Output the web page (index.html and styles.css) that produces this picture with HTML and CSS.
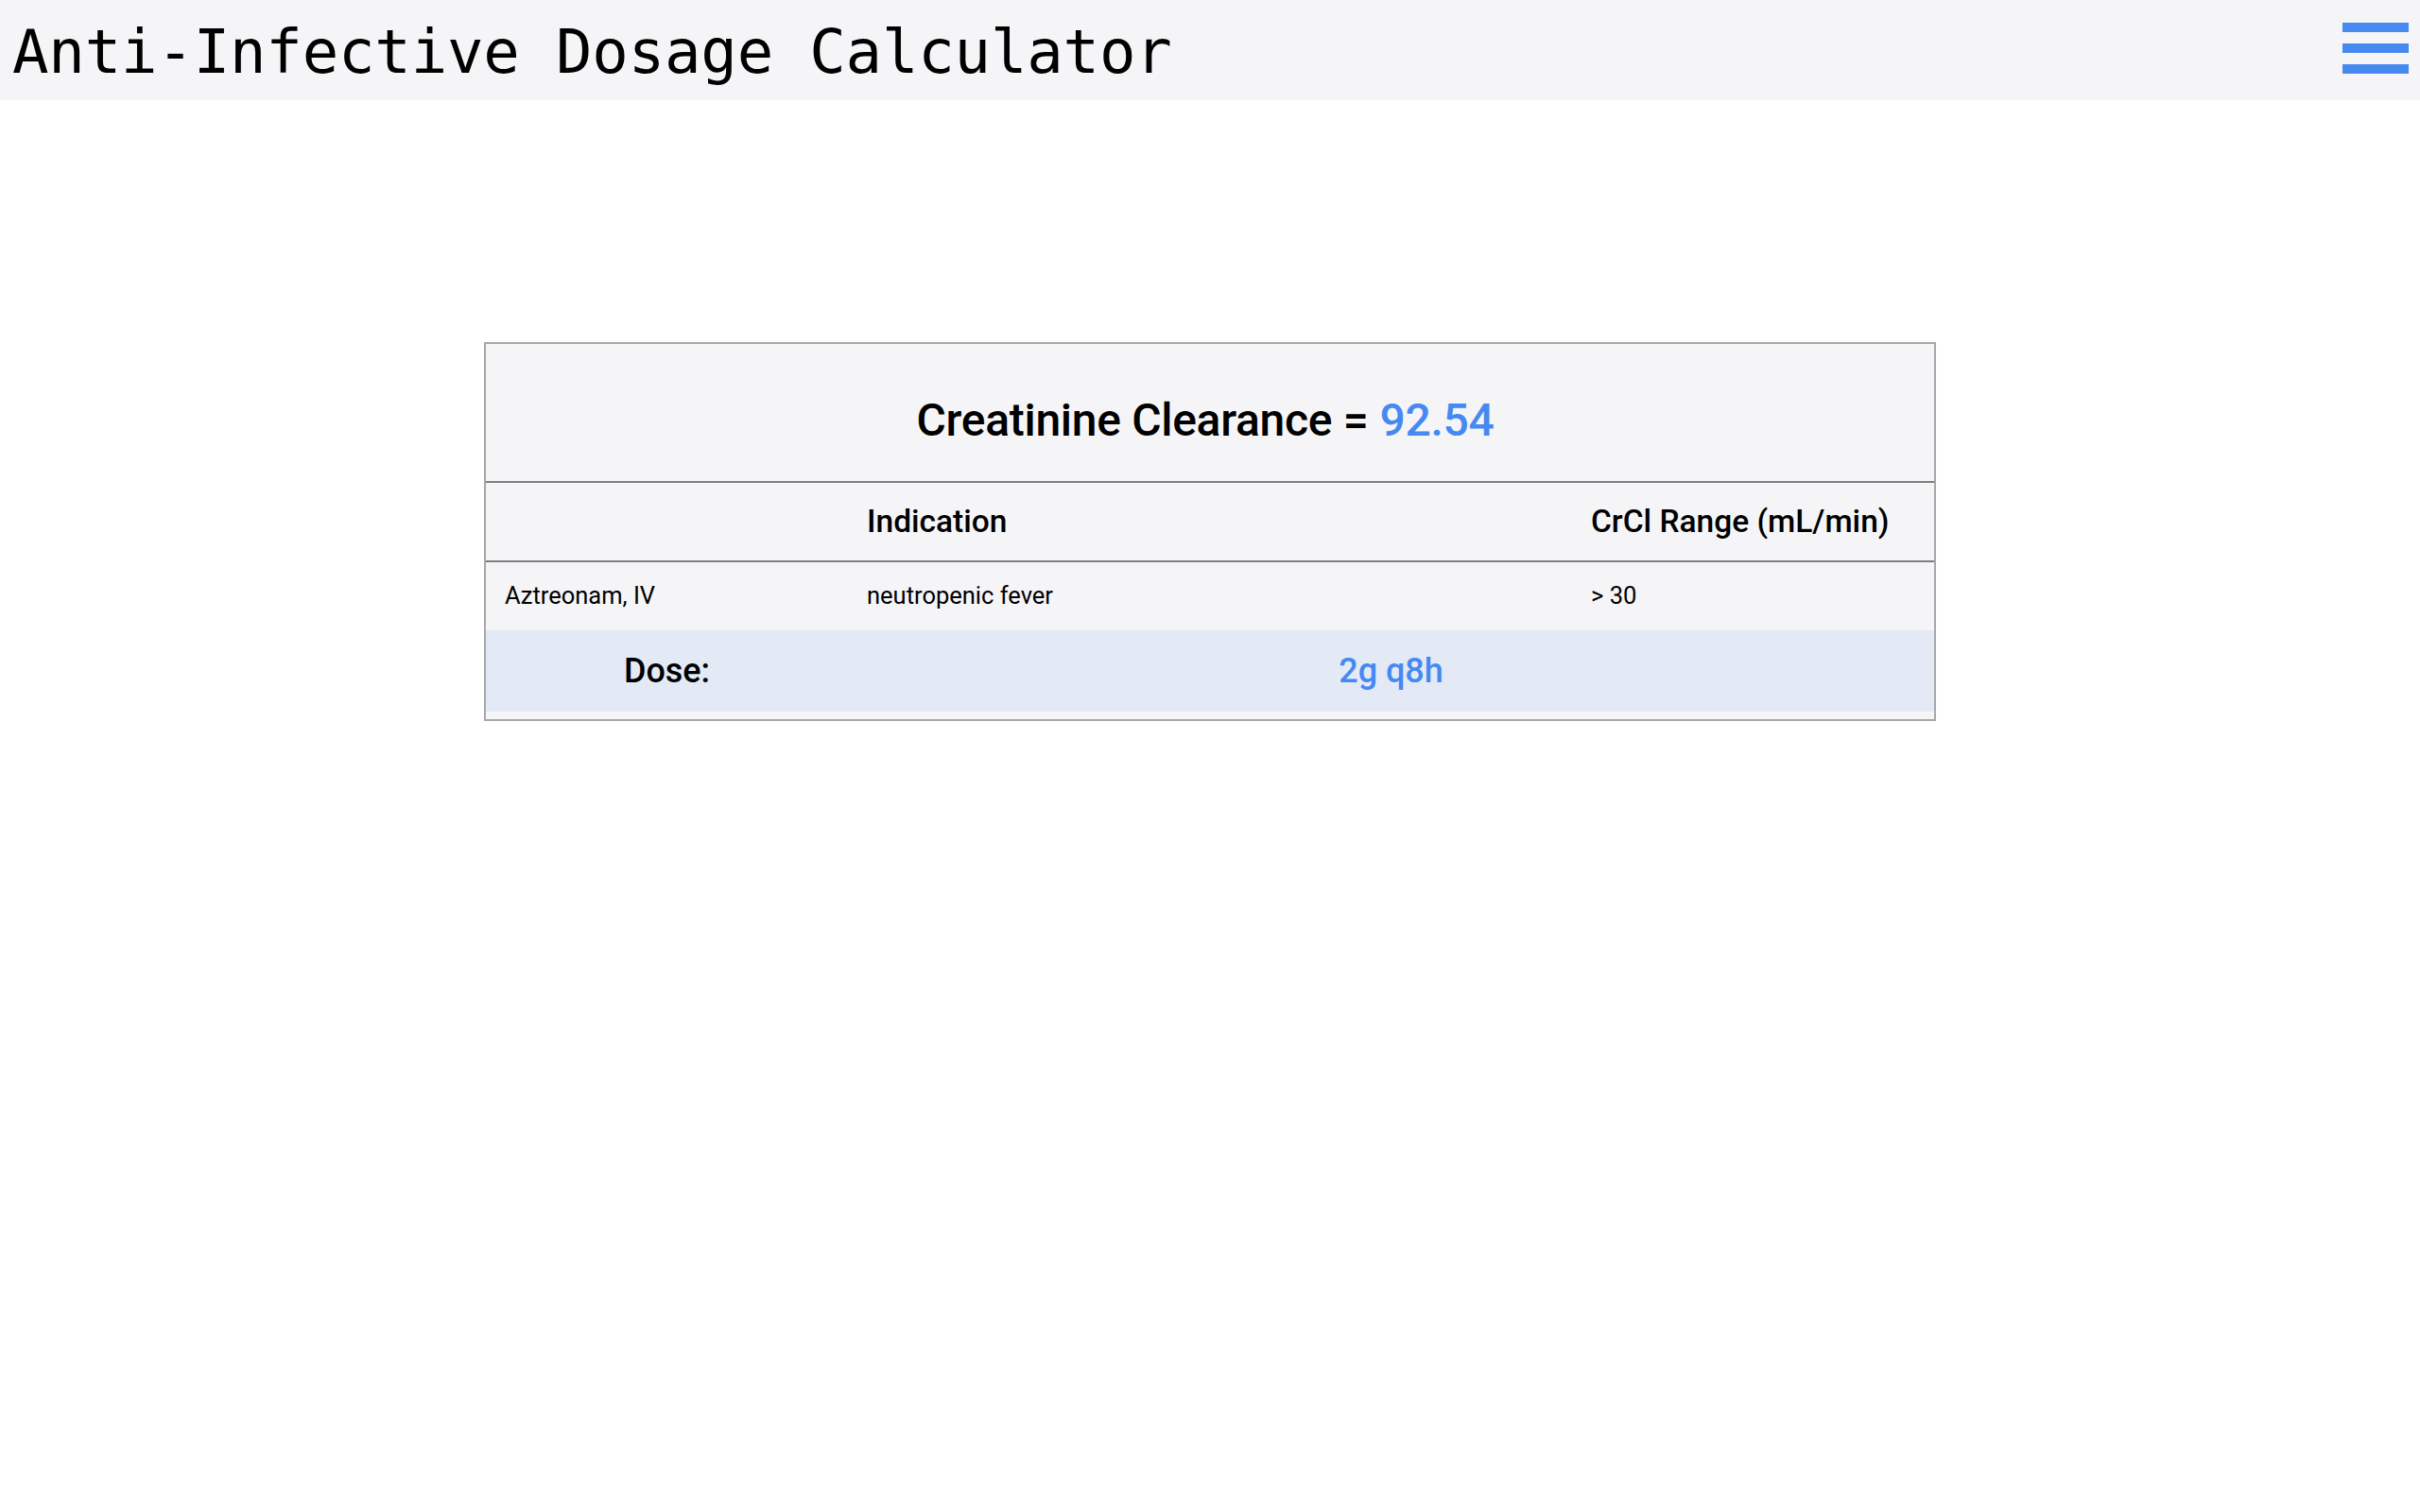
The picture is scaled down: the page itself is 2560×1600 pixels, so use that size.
FILE: index.html
```html
<!DOCTYPE html>
<html lang="en">
<head>
<meta charset="utf-8">
<title>Anti-Infective Dosage Calculator</title>
<link rel="stylesheet" href="styles.css">
</head>
<body>
<header class="topbar">
  <h1 class="app-title">Anti-Infective Dosage Calculator</h1>
  <button class="menu-btn" aria-label="Menu">
    <span class="bar"></span><span class="bar"></span><span class="bar"></span>
  </button>
</header>
<main class="content">
  <section class="result-card">
    <h2 class="crcl">Creatinine Clearance = <span class="crcl-value">92.54</span></h2>
    <div class="grid head-row">
      <div class="cell"></div>
      <div class="cell">Indication</div>
      <div class="cell">CrCl Range (mL/min)</div>
    </div>
    <div class="grid body-row">
      <div class="cell">Aztreonam, IV</div>
      <div class="cell">neutropenic fever</div>
      <div class="cell">&gt; 30</div>
    </div>
    <div class="dose-row">
      <div class="dose-label">Dose:</div>
      <div class="dose-value">2g q8h</div>
    </div>
  </section>
</main>
</body>
</html>
```
FILE: styles.css
```css
html, body {
  margin: 0;
  padding: 0;
  background: #ffffff;
  font-family: Roboto, "Liberation Sans", sans-serif;
  color: #000;
}
.topbar {
  height: 106px;
  background: #f5f5f7;
  display: flex;
  align-items: center;
  justify-content: space-between;
  padding: 0 12px 0 13px;
}
.app-title {
  margin: 0;
  font-family: "DejaVu Sans Mono", "Liberation Mono", monospace;
  font-weight: normal;
  font-size: 64px;
  line-height: 106px;
  padding-top: 4px;
  letter-spacing: -0.2px;
}
.menu-btn {
  border: 0;
  background: transparent;
  padding: 0;
  width: 70px;
  display: flex;
  flex-direction: column;
  gap: 12px;
  margin-top: -4px;
}
.bar {
  display: block;
  height: 10px;
  width: 70px;
  background: #4689f1;
}
.content {
  padding-top: 256px;
  display: flex;
  justify-content: center;
}
.result-card {
  width: 1532px;
  border: 2px solid #a8a8a8;
  background: #f5f5f7;
  padding-bottom: 8px;
}
.crcl {
  margin: 0;
  height: 147px;
  display: flex;
  align-items: center;
  justify-content: center;
  padding-top: 16px;
  padding-right: 10px;
  box-sizing: border-box;
  font-size: 48px;
  font-weight: 500;
  border-bottom: 2px solid #7f7f7f;
  letter-spacing: -0.3px;
}
.crcl-value {
  color: #4689f1;
  margin-left: 12px;
}
.grid {
  display: grid;
  grid-template-columns: 383px 766px 383px;
  align-items: center;
}
.cell {
  padding: 0 20px 2px;
}
.head-row {
  height: 82px;
  font-size: 33.5px;
  font-weight: 500;
  border-bottom: 2px solid #7f7f7f;
}
.body-row {
  height: 72px;
  font-size: 25.5px;
}
.dose-row {
  display: grid;
  grid-template-columns: 383px 1149px;
  align-items: center;
  height: 86px;
  background: #e3eaf6;
  font-size: 36px;
  font-weight: 500;
}
.dose-label, .dose-value {
  text-align: center;
}
.dose-value {
  color: #4689f1;
}
```
